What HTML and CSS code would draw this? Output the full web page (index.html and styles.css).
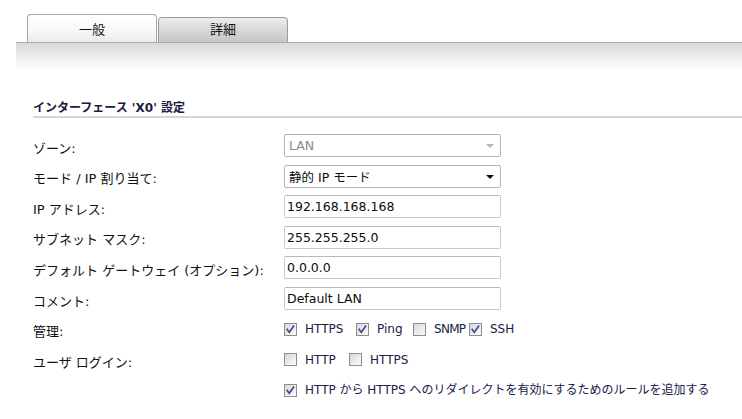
FILE: index.html
```html
<!DOCTYPE html>
<html lang="ja">
<head>
<meta charset="utf-8">
<title>インターフェース設定</title>
<link rel="stylesheet" href="styles.css">
</head>
<body>
<div class="tabs">
  <div class="tab active">一般</div>
  <div class="tab inactive">詳細</div>
</div>
<div class="band"></div>
<div class="section">
  <div class="heading">インターフェース 'X0' 設定</div>
  <div class="form">
    <div class="label">ゾーン:</div>
    <div class="ctrl"><div class="field select disabled"><span>LAN</span><span class="arrow"></span></div></div>

    <div class="label">モード / IP 割り当て:</div>
    <div class="ctrl"><div class="field select"><span>静的 IP モード</span><span class="arrow"></span></div></div>

    <div class="label">IP アドレス:</div>
    <div class="ctrl"><div class="field input">192.168.168.168</div></div>

    <div class="label">サブネット マスク:</div>
    <div class="ctrl"><div class="field input">255.255.255.0</div></div>

    <div class="label">デフォルト ゲートウェイ (オプション):</div>
    <div class="ctrl"><div class="field input">0.0.0.0</div></div>

    <div class="label">コメント:</div>
    <div class="ctrl"><div class="field input">Default LAN</div></div>

    <div class="label">管理:</div>
    <div class="ctrl checks">
      <div class="opt w72"><span class="cb"><svg class="tick" viewBox="0 0 11 11"><path d="M2.2 5.4 L4.3 8.2 L8.6 2.2"/></svg></span><span class="opt-text">HTTPS</span></div>
      <div class="opt w57"><span class="cb"><svg class="tick" viewBox="0 0 11 11"><path d="M2.2 5.4 L4.3 8.2 L8.6 2.2"/></svg></span><span class="opt-text">Ping</span></div>
      <div class="opt w56"><span class="cb"></span><span class="opt-text tight">SNMP</span></div>
      <div class="opt"><span class="cb"><svg class="tick" viewBox="0 0 11 11"><path d="M2.2 5.4 L4.3 8.2 L8.6 2.2"/></svg></span><span class="opt-text">SSH</span></div>
    </div>

    <div class="label">ユーザ ログイン:</div>
    <div class="ctrl checks">
      <div class="opt w65"><span class="cb"></span><span class="opt-text">HTTP</span></div>
      <div class="opt"><span class="cb"></span><span class="opt-text">HTTPS</span></div>
    </div>

    <div class="label"></div>
    <div class="ctrl checks">
      <div class="opt"><span class="cb"><svg class="tick" viewBox="0 0 11 11"><path d="M2.2 5.4 L4.3 8.2 L8.6 2.2"/></svg></span><span class="opt-text">HTTP から HTTPS へのリダイレクトを有効にするためのルールを追加する</span></div>
    </div>
  </div>
</div>
</body>
</html>
```
FILE: styles.css
```css
html, body {
  margin: 0;
  padding: 0;
  background: #ffffff;
}
body {
  font-family: "DejaVu Sans", "Noto Sans CJK JP", sans-serif;
  color: #111111;
  width: 742px;
  height: 419px;
  overflow: hidden;
}

/* Tabs */
.tabs {
  display: flex;
  align-items: flex-end;
  padding: 14px 0 0 27px;
  height: 28px;
}
.tab {
  box-sizing: border-box;
  width: 130px;
  border: 1px solid #a3a3a3;
  border-bottom: none;
  border-radius: 4px 4px 0 0;
  display: flex;
  align-items: center;
  justify-content: center;
  font-family: "Noto Sans CJK JP", sans-serif;
  font-size: 13px;
  color: #111111;
}
.tab.active {
  height: 28px;
  background: linear-gradient(to bottom, #ffffff 0%, #f7f7f7 60%, #ececec 100%);
  border-color: #a8a8a8;
}
.tab.inactive {
  height: 25px;
  margin-left: 1px;
  padding-bottom: 3px;
  background: linear-gradient(to bottom, #ededed 0%, #dadada 45%, #c6c6c6 100%);
  border-color: #9c9c9c;
}

/* Gray band below tabs */
.band {
  margin-left: 16px;
  height: 26px;
  border-top: 1px solid #aaa6c0;
  background: linear-gradient(to bottom, #d9d9d9 0%, #ededed 50%, #fdfdfd 100%);
}

/* Section */
.section {
  padding: 31px 0 0 33px;
}
.heading {
  font-size: 12px;
  font-weight: bold;
  line-height: 16px;
  color: #1b1b40;
  border-bottom: 2px solid #cbd9e1;
}

.form {
  margin-top: 12.2px;
  display: grid;
  grid-template-columns: 251px 1fr;
  grid-auto-rows: 30.6px;
}
.label {
  font-size: 13px;
  line-height: 16px;
  padding-top: 10.5px;
  color: #111111;
  white-space: nowrap;
}
.ctrl {
  display: flex;
  align-items: center;
}

/* Inputs & selects */
.field {
  box-sizing: border-box;
  width: 217px;
  height: 23px;
  border: 1px solid #c9c9c9;
  border-top-color: #b9b9b9;
  border-radius: 2px;
  background: #ffffff;
  font-size: 12.5px;
  color: #0c0c0c;
  display: flex;
  align-items: center;
  padding-left: 2px;
  white-space: nowrap;
}
.select {
  justify-content: space-between;
  padding-left: 4px;
  padding-right: 6px;
  border-color: #b3b3b3;
}
.select.disabled {
  color: #8a8a8a;
}
.arrow {
  width: 0;
  height: 0;
  border-left: 4px solid transparent;
  border-right: 4px solid transparent;
  border-top: 4px solid #111111;
  margin-top: 1px;
}
.select.disabled .arrow {
  border-top-color: #b8b8b8;
}

/* Checkboxes */
.checks {
  font-size: 12px;
  color: #202048;
}
.opt {
  display: flex;
  align-items: center;
  white-space: nowrap;
}
.w72 { width: 72px; }
.w57 { width: 57px; }
.w56 { width: 56px; }
.w65 { width: 65px; }
.cb {
  box-sizing: border-box;
  width: 13px;
  height: 13px;
  flex: none;
  border: 1px solid #8e8e8e;
  background: linear-gradient(135deg, #d8d8d8 0%, #ececec 55%, #fbfbfb 100%);
  margin-right: 8px;
  display: flex;
  align-items: center;
  justify-content: center;
}
.tick {
  width: 11px;
  height: 11px;
  display: block;
}
.tick path {
  fill: none;
  stroke: #3d4c96;
  stroke-width: 1.7;
  stroke-linecap: square;
}
.opt-text {
  line-height: 16px;
}
.tight {
  letter-spacing: -0.7px;
}
```
